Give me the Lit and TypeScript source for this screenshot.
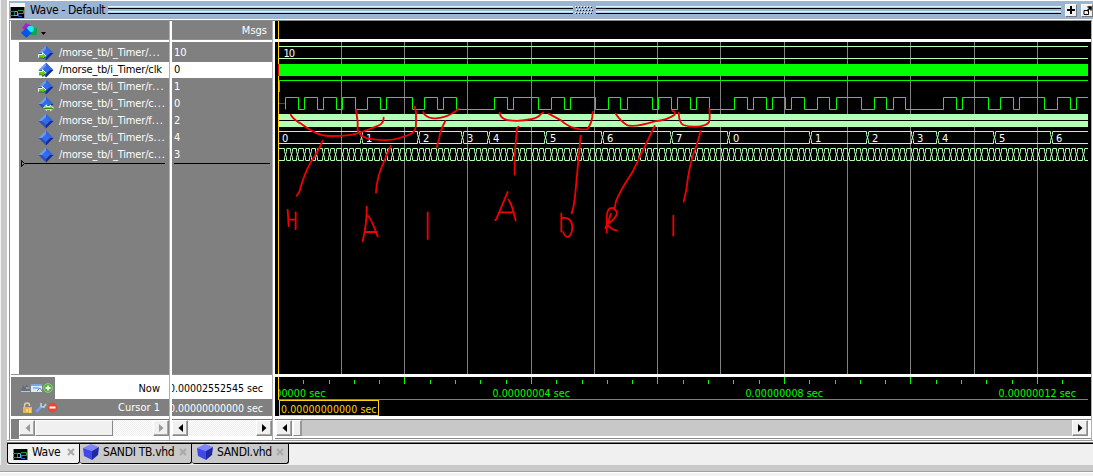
import { LitElement, html, svg, css } from "lit";
import { customElement, property } from "lit/decorators.js";

type Port = "in" | "inout" | "none";
interface Signal { name: string; value: string; port: Port; selected?: boolean; }

const SIGNALS: Signal[] = [
  { name: "/morse_tb/i_Timer/...", value: "10", port: "in" },
  { name: "/morse_tb/i_Timer/clk", value: "0", port: "in", selected: true },
  { name: "/morse_tb/i_Timer/r...", value: "1", port: "in" },
  { name: "/morse_tb/i_Timer/c...", value: "0", port: "inout" },
  { name: "/morse_tb/i_Timer/f...", value: "2", port: "none" },
  { name: "/morse_tb/i_Timer/s...", value: "4", port: "none" },
  { name: "/morse_tb/i_Timer/c...", value: "3", port: "none" },
];

// Time axis positions in pixels, measured from the left edge of the wave pane.
const ORIGIN = 275;
const END = 1088 - ORIGIN;
const GRID = [341, 404, 467, 531, 594, 657, 720, 784, 847, 910, 974, 1037].map((x) => x - ORIGIN);
const EDGES = [
  285, 298, 304, 317, 323, 336, 342, 355, 367, 380, 386, 412, 424, 437, 443, 456,
  494, 507, 513, 538, 551, 564, 570, 595, 608, 620, 627, 652, 658, 671, 677, 690,
  696, 709, 734, 747, 753, 766, 772, 785, 791, 804, 817, 829, 836, 861, 874, 886,
  893, 905, 943, 956, 962, 988, 1000, 1013, 1019, 1044, 1057, 1070, 1076,
].map((x) => x - ORIGIN);
const STEPS: [number, string][] = [
  [361, "1"], [418, "2"], [462, "3"], [488, "4"], [545, "5"], [602, "6"], [671, "7"],
  [728, "0"], [810, "1"], [867, "2"], [912, "3"], [937, "4"], [994, "5"], [1051, "6"],
].map(([x, t]) => [(x as number) - ORIGIN, t as string]);
const COUNTS = Array.from({ length: 127 }, (_, i) => Math.round(284.6 + i * 6.334) - ORIGIN).filter((x) => x < END - 1);

function pulsePath(): string {
  const steps = EDGES.map((x, i) => `H${x + 0.5}V${i % 2 === 0 ? 55.5 : 67.5}`).join("");
  return `M${EDGES[0] + 0.5} 67.5${steps}H${END}`;
}

function busPath(xs: number[], top: number): string {
  const bottom = top + 12;
  let d = "";
  let from = 4;
  for (const x of xs) {
    d += `M${from} ${top}H${x - 0.5}M${from} ${bottom}H${x - 0.5}`;
    d += `M${x - 0.5} ${top}V${top + 3}L${x + 1.5} ${bottom - 3}V${bottom}`;
    d += `M${x + 1.5} ${top}V${top + 3}L${x - 0.5} ${bottom - 3}V${bottom}`;
    from = x + 2;
  }
  return d + `M${from} ${top}H${END}M${from} ${bottom}H${END}`;
}

const waveGlyph = svg`
  <rect width="15" height="15" fill="#888"/>
  <rect x="0" y="0" width="15" height="4" fill="#f4f4f4"/>
  <rect x="1" y="4" width="13" height="11" fill="#000"/>
  <path d="M0 8.500H4.500V12.500H0" fill="none" stroke="#0f8f60"/>
  <path d="M4.500 8.500H7.500V13M4 12.500H7.500" fill="none" stroke="#20d0e0"/>
  <path d="M8 7.500H13.500M8 10.500H13.500V7.500" fill="none" stroke="#1c9c4a"/>
  <path d="M8.500 10V13.500H12" fill="none" stroke="#2850e8"/>`;

@customElement("signal-icon")
class SignalIcon extends LitElement {
  @property() port: Port = "none";
  static styles = css`:host { display: block; width: 16px; height: 16px; } svg { display: block; }`;
  render() {
    return html`<svg width="16" height="16" viewBox="0 0 16 16">
      <path d="M8 .500L15.500 8H8Z" fill="#3566d8"/><path d="M8 .500L.500 8H8Z" fill="#6f9ae8"/>
      <path d="M15.500 8L8 15.500V8Z" fill="#192c90"/><path d="M.500 8L8 15.500V8Z" fill="#2f51b8"/>
      <path d="M8 4L12 8L8 12L4 8Z" fill="#2f6cf2"/>
      ${this.port === "in" ? svg`<path d="M.5 9.500H4.500V7.500L8 11L4.500 14.800V12.500H.5Z" fill="#5fd010" stroke="#fff" stroke-width=".9"/><path d="M1 12.800H4.800V14.500L7.500 11.500" fill="none" stroke="#176000"/>` : ""}
      ${this.port === "inout" ? svg`<path d="M5.500 12L8.500 8.800V10.500H12V8.800L15.500 12L12.500 14.800V13.500H8.500V14.800Z" fill="#74dc12" stroke="#fff" stroke-width=".9"/><path d="M6 12.700H15" stroke="#287800"/>` : ""}
    </svg>`;
  }
}

@customElement("scroll-arrow")
class ScrollArrow extends LitElement {
  @property() dir = "left";
  @property({ type: Boolean }) disabled = false;
  static styles = css`
    :host { display: grid; place-items: center; box-sizing: border-box; width: 16px; height: 16px; flex: none;
      background: #f0f0f0; border: 1px solid #fff; border-right-color: #888; border-bottom-color: #888; box-shadow: inset -1px -1px #a8a8a8; }
    svg { display: block; }`;
  render() {
    return html`<svg width="5" height="8" viewBox="0 0 5 8"><path
      d=${this.dir === "left" ? "M5 0V8L.5 4Z" : "M0 0V8L4.500 4Z"} fill=${this.disabled ? "#9a9a9a" : "#000"}/></svg>`;
  }
}

@customElement("wave-canvas")
class WaveCanvas extends LitElement {
  static styles = css`
    :host { display: block; width: 816px; height: 332px; background: #000; }
    svg { display: block; }
    text { font: 11px "DejaVu Sans Condensed", "DejaVu Sans", sans-serif; font-stretch: condensed; fill: #fff; }
    .grid { stroke: #808080; }
    .pale { stroke: #b3ffb3; fill: none; }
    .live { stroke: #0f0; fill: none; }
    .ink { stroke: #f00000; fill: none; stroke-width: 5.500; stroke-linecap: round; stroke-linejoin: round; }`;
  render() {
    return html`<svg width="816" height="332" viewBox="0 0 816 332">
      ${GRID.map((x) => svg`<path class="grid" d=${`M${x + 0.5} 0V332`}/>`)}
      <path class="pale" d="M4 4.500H813M4 16.500H813"/>
      <rect x="4" y="22" width="809" height="12" fill="#0f0"/>
      <path class="live" d="M4.500 50V38.500H813"/>
      <path d="M4 61.500H11" stroke="#e00000"/>
      <path class="live" d=${pulsePath()}/>
      <rect x="4" y="72" width="809" height="13" fill="#b3ffb3"/>
      <path d="M4 78.500H813" stroke="#000"/>
      <path class="pale" d=${busPath(STEPS.map((s) => s[0]), 89.5)}/>
      <path class="pale" d=${busPath(COUNTS, 106.5)}/>
      <path d="M3.500 0V332" stroke="#ffd200"/><path d="M3.500 22V34" stroke="#f00"/>
      <text x="8.500" y="15" textLength="11.500">10</text>
      <text x="7" y="100">0</text>
      ${STEPS.map(([x, t]) => svg`<text x=${x + 5} y="100">${t}</text>`)}
      <g class="ink" transform="translate(-5 -12) scale(.33333)">
        <path d="M62 254Q72 270 93 281Q116 298 135 307Q158 319 185 318Q230 319 262 310Q300 298 325 287Q341 280 341 263"/>
        <path d="M258 240L263 275L263 301Q267 318 292 325Q330 333 368 329Q405 321 427 309Q439 300 438 277L438 245L434 230"/>
        <path d="M460 246L463 253Q479 267 499 265Q529 261 550 248L566 237"/>
        <path d="M158 332Q147 361 124 394Q103 430 88 485L80 497M362 348L340 399Q320 443 318 488M526 273Q509 305 508 324L500 352"/>
        <path d="M53 540L56 588M77 547V597M57 569H76M290 530Q291 578 278 634M294 558Q302 562 323 619M287 606H320M473 547V627"/>
      </g>
      <g class="ink" transform="translate(205 -12) scale(.33333)">
        <path d="M59 248Q61 266 82 270Q118 276 156 267Q179 261 182 252L190 248"/>
        <path d="M206 251L243 271Q266 293 301 298H322Q338 276 338 246"/>
        <path d="M407 251Q423 275 443 286Q466 292 524 274Q562 270 584 254Q587 244 577 243"/>
        <path d="M596 248Q597 278 610 285Q632 293 660 289Q681 286 687 276Q691 266 688 236"/>
        <path d="M116 290L111 293L107 340L104 380V434M302 317L286 490Q282 530 275 550M524 288L457 427Q420 482 408 514L403 539M662 303L650 345Q628 396 619 480L611 515"/>
        <path d="M83 486L49 567L46 570M85 509Q95 518 107 572M58 547H99M244 550V605M248 564Q266 561 274 577Q282 599 269 618Q257 625 252 612L250 606M380 608V570Q379 541 390 535Q404 529 411 548Q410 564 382 583L376 594M392 552L380 594M382 584Q398 602 410 601M580 557V617"/>
      </g>
    </svg>`;
  }
}

@customElement("time-ruler")
class TimeRuler extends LitElement {
  static styles = css`
    :host { display: block; width: 816px; height: 39px; background: #000; }
    svg { display: block; }
    text { font: 10.5px "DejaVu Sans Condensed", "DejaVu Sans", sans-serif; font-stretch: condensed; fill: #0f0; }
    .cursor { fill: #ffd200; }`;
  render() {
    const ticks = Array.from({ length: 32 }, (_, i) => ({ x: Math.round(2.9 + i * 25.3), major: i % 5 === 0 })).slice(1);
    return html`<svg width="816" height="39" viewBox="0 0 816 39">
      <defs><clipPath id="left-edge"><rect x="3" y="0" width="813" height="39"/></clipPath></defs>
      ${ticks.map((t) => svg`<path d=${`M${t.x + 0.5} ${t.major ? 0 : 3}V7`} stroke="#0f0"/>`)}
      <g clip-path="url(#left-edge)"><text x="-27.500" y="20" textLength="78">0.00000000 sec</text></g>
      <text x="217.500" y="20" textLength="77.500">0.00000004 sec</text>
      <text x="470.500" y="20" textLength="77.500">0.00000008 sec</text>
      <text x="723.500" y="20" textLength="77.500">0.00000012 sec</text>
      <path d="M4 22.500H813" stroke="#808080"/>
      <path d="M3.500 0V23" stroke="#ffd200"/>
      <rect x="4.500" y="23.500" width="99" height="15" fill="#000" stroke="#ffd200"/>
      <text class="cursor" x="6" y="35.500" textLength="95.500">0.00000000000 sec</text>
    </svg>`;
  }
}

@customElement("app-root")
export class AppRoot extends LitElement {
  static styles = css`
    :host { display: flex; flex-direction: column; width: 1093px; height: 476px; box-sizing: border-box; overflow: hidden;
      background: #f0f0f0; color: #000; font: 11px "DejaVu Sans Condensed", "DejaVu Sans", sans-serif; font-stretch: condensed; white-space: nowrap; }
    svg { display: block; flex: none; }
    .upper { display: flex; height: 465px; flex: none; }
    .edge { width: 6px; margin: 0 0 0 1px; background: #c9c9c9; flex: none; }
    .window { flex: 1; min-width: 0; }
    .frame { height: 441px; box-sizing: border-box; padding: 1px 0 0 2px; background: #fff; display: flex; flex-direction: column; }
    .title { display: flex; align-items: center; height: 18px; background: #9bb4d1; border-bottom: 1px solid #fff; font-size: 12px; flex: none; }
    .title .glyph { margin: 0 5px 0 1px; }
    .title-text { width: 78px; letter-spacing: -.32px; flex: none; }
    .rails { display: flex; flex-direction: column; gap: 2px; flex: none; }
    .rails i { display: block; height: 3px; box-sizing: border-box; border-top: 1px solid #d8f4ff; border-bottom: 1px solid #000; background: #b4d0e8; }
    .rail-left { width: 465px; }
    .rail-right { width: 465px; margin-left: 2px; }
    .grip { margin: 0 0 0 1px; }
    .tool { display: grid; place-items: center; box-sizing: border-box; width: 12px; height: 13px; margin-left: 4px; background: #f0f0f0; border: 1px solid #fff; border-right-color: #777; border-bottom-color: #777; flex: none; }
    .panes { display: grid; grid-template-columns: 159px 101px 817px; column-gap: 2px; border-top: 1px solid #888; border-left: 1px solid #909090; padding-left: 1px; flex: none; width: 1080px; border-right: 1px solid #909090; height: 419px; }
    .pane { display: grid; grid-template-rows: 18px 332px 39px 20px; row-gap: 3px; min-width: 0; padding-bottom: 1px; border-right: 1px solid #b0b0b0; }
    .head { background: #808080; color: #fff; display: flex; align-items: center; box-shadow: 0 1px #909090; }
    .names .head { padding-left: 10px; gap: 3px; }
    .values .head { justify-content: flex-end; padding-right: 5px; }
    .caret { margin-top: 6px; }
    .list { background: #808080; color: #fff; box-shadow: 0 1px #909090; padding-top: 3px; box-sizing: border-box; }
    .names .list { border-left: 8px solid #fff; }
    .row { height: 17px; display: flex; align-items: center; box-sizing: border-box; border-bottom: 1px solid transparent; background-clip: padding-box; }
    .names .row { padding-left: 19px; gap: 5px; letter-spacing: -.15px; }
    .values .row { padding-left: 2px; }
    .row.on { background-color: #fff; color: #000; }
    .row span { margin-top: -1px; }
    .row .dots { letter-spacing: .9px; margin: 0; }
    .end { display: flex; height: 7px; margin-top: -4px; align-items: center; }
    .names .end { padding-left: 2px; }
    .end b { display: block; height: 1px; background: #000; width: 140px; }
    .values .end b { width: 96px; margin-left: 2px; }
    .foot { display: grid; grid-template-rows: 22px 17px; }
    .line { display: flex; align-items: center; background: #fff; min-width: 0; overflow: hidden; }
    .line.dim { background: #808080; color: #fff; }
    .line .icons { width: 44px; height: 100%; background: #808080; display: flex; align-items: center; box-sizing: border-box; padding-left: 9px; flex: none; }
    .line.dim .icons { padding-left: 11px; width: 50px; }
    .line .label { flex: 1; text-align: right; padding-right: 9px; }
    .values .line { justify-content: flex-end; font-size: 10.5px; }
    .values .line span { padding-right: 9px; }
    .bar { display: flex; align-items: flex-start; background: #fff; border-top: 1px solid #777; box-sizing: border-box; }
    .names .bar { border-left: 8px solid #808080; }
    .track { flex: 1; height: 16px; background: #f8f8f8 repeating-conic-gradient(#ededed 0 25%, #fff 0 50%) 0 0 / 2px 2px; }
    .thumb { height: 16px; box-sizing: border-box; background: #f0f0f0; border: 1px solid #fff; border-right-color: #888; border-bottom-color: #888; flex: none; }
    .thumb.wide { width: 78px; }
    .thumb.slim { width: 9px; margin-left: 1px; border-right: 2px solid #999; }
    .waves .track { background: #c8c8c8; }
    .waves .bar { padding: 0 3px 0 1px; border-bottom: 1px solid #888; }
    .tabs { display: flex; border-top: 1px solid #000; height: 21px; box-shadow: 0 -1px #777, 0 -2px #fff, 0 -3px #999; margin-top: 2px; background: #f0f0f0; }
    .tab { display: flex; align-items: center; box-sizing: border-box; height: 20px; background: #c9c9c9; border: 1px solid #000; border-top: 0; border-left: 0; border-radius: 0 0 3px 3px; font-size: 12px; flex: none; }
    .tab.now { background: #f0f0f0; border-left: 1px solid #000; width: 73px; padding-left: 5px; gap: 4px; }
    .tab.tb { width: 112px; padding-left: 3px; gap: 4px; }
    .tab.src { width: 97px; padding-left: 5px; gap: 4px; }
    .tab .cap { flex: 1; letter-spacing: -.3px; margin-top: -3px; }
    .tab svg { margin-top: -3px; }
    .tab .close { margin-right: 4px; }
    .band { height: 6px; background: #c9c9c9; border-bottom: 1px solid #a0a0a0; flex: none; }
    .status { flex: 1; background: #f2f2f2; border-top: 1px solid #fff; }`;

  private cube() {
    return svg`<path d="M0 4L8 0L16 3L9 7Z" fill="#7f85ff"/><path d="M0 4L9 7V16L1 12Z" fill="#4248e8"/><path d="M16 3L9 7V16L15 11Z" fill="#2028a8"/>`;
  }

  private tab(kind: string, name: string) {
    return html`<div class="tab ${kind}">
      ${kind === "now"
        ? html`<svg width="15" height="15">${waveGlyph}</svg>`
        : html`<svg width="16" height="16">${this.cube()}</svg>`}
      <span class="cap">${name}</span>
      <svg class="close" width="8" height="8"><path d="M1 1L7 7M7 1L1 7" stroke="#aaa" stroke-width="2.200"/></svg>
    </div>`;
  }

  private signalName(name: string) {
    return name.endsWith("...") ? html`<span>${name.slice(0, -3)}<span class="dots">...</span></span>` : html`<span>${name}</span>`;
  }

  render() {
    return html`
      <div class="upper">
        <div class="edge"></div>
        <div class="window">
          <div class="frame">
            <div class="title">
              <svg class="glyph" width="15" height="15">${waveGlyph}</svg>
              <span class="title-text">Wave - Default</span>
              <div class="rails rail-left"><i></i><i></i></div>
              <svg class="grip" width="20" height="10">
                ${[0, 3, 6].map((y, r) => Array.from({ length: 6 }, (_, i) => svg`
                  <rect x=${1 + i * 3 + (r === 1 ? 1 : 0)} y=${y + 1} width="1" height="1" fill="#fff"/>
                  <rect x=${2 + i * 3 + (r === 1 ? 1 : 0)} y=${y + 2} width="1" height="1" fill="#111"/>`))}
              </svg>
              <div class="rails rail-right"><i></i><i></i></div>
              <div class="tool"><svg width="8" height="8"><path d="M4 0V8M0 4H8" stroke="#000" stroke-width="2"/></svg></div>
              <div class="tool"><svg width="9" height="9"><path d="M1 4.500H5.500V8.500H1Z" fill="none" stroke="#000"/><path d="M4 5L7.500 1.500M4.500 1H8V4.500" fill="none" stroke="#000" stroke-width="1.500"/></svg></div>
            </div>
            <div class="panes">
              <div class="pane names">
                <div class="head">
                  <svg width="17" height="17"><path d="M1 6L5 1L11 4L7 10Z" fill="#b01cc8"/><rect x="8" y="6" width="8" height="7" fill="#16a050"/><circle cx="9.500" cy="7" r="3.300" fill="#18e8f8"/><path d="M5 6L10.500 11L5.500 16L0 11Z" fill="#0055ee"/></svg>
                  <svg class="caret" width="5" height="3"><path d="M0 0H5L2.500 3Z" fill="#000"/></svg>
                </div>
                <div class="list">
                  ${SIGNALS.map((s) => html`<div class="row ${s.selected ? "on" : ""}"><signal-icon .port=${s.port}></signal-icon>${this.signalName(s.name)}</div>`)}
                  <div class="end"><svg width="4" height="7"><path d="M.5 .5V6.500L3.500 3.500Z" fill="none" stroke="#000"/></svg><b></b></div>
                </div>
                <div class="foot">
                  <div class="line">
                    <div class="icons">
                      <svg width="33" height="12">
                        <path d="M1 9L3 3L5 5L7 2L10 9Z" fill="#65707c"/><path d="M1 9.500H10M6 6H9" stroke="#b9c8d8"/>
                        <rect x="11" y="2" width="11" height="8" fill="#dceafa"/><rect x="11" y="2" width="11" height="2" fill="#7ba7df"/><path d="M13 6H19M17 9L20 6L22 9" stroke="#5b87c8" fill="none"/>
                        <circle cx="28" cy="6" r="5" fill="#55ad3e"/><circle cx="28" cy="6" r="4.400" fill="none" stroke="#9ad486" stroke-width=".8"/><path d="M28 3.500V8.500M25.500 6H30.500" stroke="#fff" stroke-width="1.800"/>
                      </svg>
                    </div>
                    <span class="label">Now</span>
                  </div>
                  <div class="line dim">
                    <div class="icons">
                      <svg width="36" height="12">
                        <path d="M2.500 6V3.500Q2.500 1 5 1Q7.500 1 7.500 3.500V4" fill="none" stroke="#d8d0b0" stroke-width="1.500"/><rect x="1" y="5" width="9" height="6" fill="#e8b34a"/><path d="M5 7V10M8 6V11" stroke="#fff0b0"/>
                        <path d="M14 10L20 4" stroke="#6fa4e8" stroke-width="2.500"/><path d="M19 1V4.500L22 5L24 2" fill="none" stroke="#b8cbe0" stroke-width="1.700"/>
                        <circle cx="30.500" cy="5.500" r="5" fill="#e4483c"/><path d="M27.500 5.500H33.500" stroke="#fff" stroke-width="2"/>
                      </svg>
                    </div>
                    <span class="label">Cursor 1</span>
                  </div>
                </div>
                <div class="bar">
                  <scroll-arrow disabled></scroll-arrow><div class="thumb wide"></div><div class="track"></div><scroll-arrow dir="right" disabled></scroll-arrow>
                </div>
              </div>
              <div class="pane values">
                <div class="head">Msgs</div>
                <div class="list">
                  ${SIGNALS.map((s) => html`<div class="row ${s.selected ? "on" : ""}"><span>${s.value}</span></div>`)}
                  <div class="end"><b></b></div>
                </div>
                <div class="foot">
                  <div class="line"><span>0.00002552545 sec</span></div>
                  <div class="line dim"><span>0.00000000000 sec</span></div>
                </div>
                <div class="bar"><scroll-arrow></scroll-arrow><div class="track"></div><scroll-arrow dir="right"></scroll-arrow></div>
              </div>
              <div class="pane waves">
                <svg width="816" height="18"><rect width="816" height="18" fill="#000"/><path d="M3.500 0V18" stroke="#ffd200"/></svg>
                <wave-canvas></wave-canvas>
                <time-ruler></time-ruler>
                <div class="bar"><scroll-arrow></scroll-arrow><div class="thumb slim"></div><div class="track"></div><scroll-arrow dir="right"></scroll-arrow></div>
              </div>
            </div>
          </div>
          <div class="tabs">${this.tab("now", "Wave")}${this.tab("tb", "SANDI TB.vhd")}${this.tab("src", "SANDI.vhd")}</div>
        </div>
      </div>
      <div class="band"></div>
      <div class="status"></div>`;
  }
}
